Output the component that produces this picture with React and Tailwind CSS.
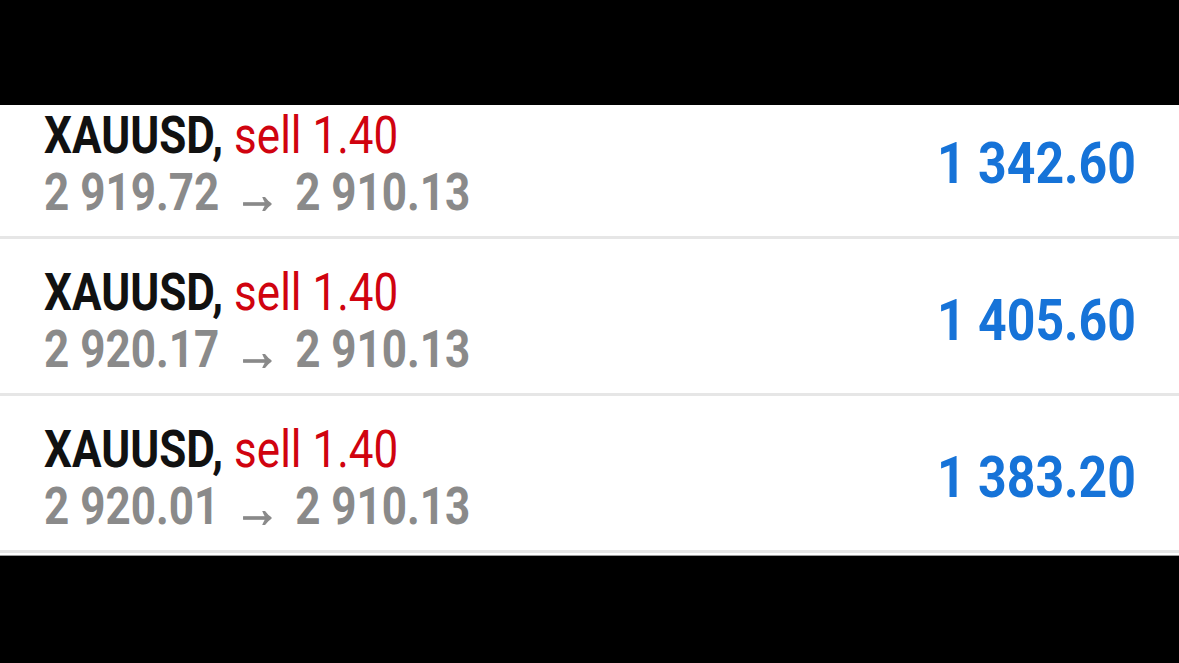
const trades = [
  { symbol: 'XAUUSD', side: 'sell', volume: '1.40', open: '2 919.72', close: '2 910.13', profit: '1 342.60' },
  { symbol: 'XAUUSD', side: 'sell', volume: '1.40', open: '2 920.17', close: '2 910.13', profit: '1 405.60' },
  { symbol: 'XAUUSD', side: 'sell', volume: '1.40', open: '2 920.01', close: '2 910.13', profit: '1 383.20' },
];

function TradeRow({ trade, first }) {
  return (
    <div
      className={`flex items-center justify-between bg-white pl-[44px] pr-[43px] pb-[15px] border-b-[3px] border-[#e6e6e6] ${
        first ? 'pt-[2px]' : 'pt-[25px]'
      }`}
    >
      <div className="flex flex-col">
        <div className="h-[57px] leading-[57px] text-[44px] whitespace-nowrap">
          <span className="inline-block scale-y-[1.18] origin-center">
            <span className="font-bold text-[#111111]">{trade.symbol},</span>{' '}
            <span className="font-normal text-[#d0030f]">
              {trade.side} {trade.volume}
            </span>
          </span>
        </div>
        <div className="h-[57px] leading-[57px] text-[44px] whitespace-nowrap">
          <span className="inline-block scale-y-[1.18] origin-center font-bold text-[#8a8a8a]">
            {trade.open}
            <span className="inline-block px-[15px] text-[46px] leading-none font-bold align-[-3px] [-webkit-text-stroke:1.2px_#8a8a8a]">→</span>
            {trade.close}
          </span>
        </div>
      </div>
      <div className="h-[57px] leading-[57px] text-[50px] whitespace-nowrap">
        <span className="inline-block scale-y-[1.15] origin-center font-bold text-[#1673d8]">{trade.profit}</span>
      </div>
    </div>
  );
}

export default function App() {
  return (
    <div className="w-[1179px] h-[663px] bg-black flex flex-col overflow-hidden" style={{ fontFamily: 'Roboto, "Liberation Sans", sans-serif' }}>
      <div className="h-[105px] shrink-0" />
      <div className="flex flex-col bg-white pb-[2px] border-b border-[#9e9e9e]">
        {trades.map((t, i) => (
          <TradeRow key={i} trade={t} first={i === 0} />
        ))}
      </div>
      <div className="flex-1" />
    </div>
  );
}
